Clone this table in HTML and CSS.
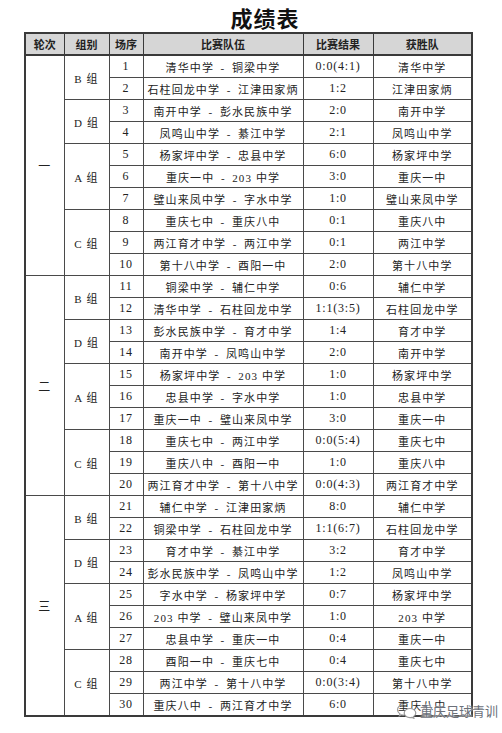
FILE: index.html
```html
<!DOCTYPE html>
<html lang="zh">
<head>
<meta charset="utf-8">
<link rel="stylesheet" href="styles.css">
</head>
<body>
<div class="page">
  <h1 class="title">成绩表</h1>
  <table class="results">
    <colgroup>
      <col class="c-round"><col class="c-group"><col class="c-no"><col class="c-teams"><col class="c-score"><col class="c-win">
    </colgroup>
    <thead>
      <tr><th>轮次</th><th>组别</th><th>场序</th><th>比赛队伍</th><th>比赛结果</th><th>获胜队</th></tr>
    </thead>
    <tbody>
      <tr><td rowspan="10" class="round">一</td><td rowspan="2">B 组</td><td class="num">1</td><td>清华中学&ensp;-&ensp;铜梁中学</td><td class="num">0:0(4:1)</td><td>清华中学</td></tr>
      <tr><td class="num">2</td><td>石柱回龙中学&ensp;-&ensp;江津田家炳</td><td class="num">1:2</td><td>江津田家炳</td></tr>
      <tr><td rowspan="2">D 组</td><td class="num">3</td><td>南开中学&ensp;-&ensp;彭水民族中学</td><td class="num">2:0</td><td>南开中学</td></tr>
      <tr><td class="num">4</td><td>凤鸣山中学&ensp;-&ensp;綦江中学</td><td class="num">2:1</td><td>凤鸣山中学</td></tr>
      <tr><td rowspan="3">A 组</td><td class="num">5</td><td>杨家坪中学&ensp;-&ensp;忠县中学</td><td class="num">6:0</td><td>杨家坪中学</td></tr>
      <tr><td class="num">6</td><td>重庆一中&ensp;-&ensp;203 中学</td><td class="num">3:0</td><td>重庆一中</td></tr>
      <tr><td class="num">7</td><td>璧山来凤中学&ensp;-&ensp;字水中学</td><td class="num">1:0</td><td>璧山来凤中学</td></tr>
      <tr><td rowspan="3">C 组</td><td class="num">8</td><td>重庆七中&ensp;-&ensp;重庆八中</td><td class="num">0:1</td><td>重庆八中</td></tr>
      <tr><td class="num">9</td><td>两江育才中学&ensp;-&ensp;两江中学</td><td class="num">0:1</td><td>两江中学</td></tr>
      <tr><td class="num">10</td><td>第十八中学&ensp;-&ensp;酉阳一中</td><td class="num">2:0</td><td>第十八中学</td></tr>

      <tr><td rowspan="10" class="round">二</td><td rowspan="2">B 组</td><td class="num">11</td><td>铜梁中学&ensp;-&ensp;辅仁中学</td><td class="num">0:6</td><td>辅仁中学</td></tr>
      <tr><td class="num">12</td><td>清华中学&ensp;-&ensp;石柱回龙中学</td><td class="num">1:1(3:5)</td><td>石柱回龙中学</td></tr>
      <tr><td rowspan="2">D 组</td><td class="num">13</td><td>彭水民族中学&ensp;-&ensp;育才中学</td><td class="num">1:4</td><td>育才中学</td></tr>
      <tr><td class="num">14</td><td>南开中学&ensp;-&ensp;凤鸣山中学</td><td class="num">2:0</td><td>南开中学</td></tr>
      <tr><td rowspan="3">A 组</td><td class="num">15</td><td>杨家坪中学&ensp;-&ensp;203 中学</td><td class="num">1:0</td><td>杨家坪中学</td></tr>
      <tr><td class="num">16</td><td>忠县中学&ensp;-&ensp;字水中学</td><td class="num">1:0</td><td>忠县中学</td></tr>
      <tr><td class="num">17</td><td>重庆一中&ensp;-&ensp;璧山来凤中学</td><td class="num">3:0</td><td>重庆一中</td></tr>
      <tr><td rowspan="3">C 组</td><td class="num">18</td><td>重庆七中&ensp;-&ensp;两江中学</td><td class="num">0:0(5:4)</td><td>重庆七中</td></tr>
      <tr><td class="num">19</td><td>重庆八中&ensp;-&ensp;酉阳一中</td><td class="num">1:0</td><td>重庆八中</td></tr>
      <tr><td class="num">20</td><td>两江育才中学&ensp;-&ensp;第十八中学</td><td class="num">0:0(4:3)</td><td>两江育才中学</td></tr>

      <tr><td rowspan="10" class="round">三</td><td rowspan="2">B 组</td><td class="num">21</td><td>辅仁中学&ensp;-&ensp;江津田家炳</td><td class="num">8:0</td><td>辅仁中学</td></tr>
      <tr><td class="num">22</td><td>铜梁中学&ensp;-&ensp;石柱回龙中学</td><td class="num">1:1(6:7)</td><td>石柱回龙中学</td></tr>
      <tr><td rowspan="2">D 组</td><td class="num">23</td><td>育才中学&ensp;-&ensp;綦江中学</td><td class="num">3:2</td><td>育才中学</td></tr>
      <tr><td class="num">24</td><td>彭水民族中学&ensp;-&ensp;凤鸣山中学</td><td class="num">1:2</td><td>凤鸣山中学</td></tr>
      <tr><td rowspan="3">A 组</td><td class="num">25</td><td>字水中学&ensp;-&ensp;杨家坪中学</td><td class="num">0:7</td><td>杨家坪中学</td></tr>
      <tr><td class="num">26</td><td>203 中学&ensp;-&ensp;璧山来凤中学</td><td class="num">1:0</td><td>203 中学</td></tr>
      <tr><td class="num">27</td><td>忠县中学&ensp;-&ensp;重庆一中</td><td class="num">0:4</td><td>重庆一中</td></tr>
      <tr><td rowspan="3">C 组</td><td class="num">28</td><td>酉阳一中&ensp;-&ensp;重庆七中</td><td class="num">0:4</td><td>重庆七中</td></tr>
      <tr><td class="num">29</td><td>两江中学&ensp;-&ensp;第十八中学</td><td class="num">0:0(3:4)</td><td>第十八中学</td></tr>
      <tr><td class="num">30</td><td>重庆八中&ensp;-&ensp;两江育才中学</td><td class="num">6:0</td><td>重庆八中</td></tr>
    </tbody>
  </table>
  <div class="watermark">
    <svg class="wm-icon" width="22" height="16" viewBox="0 0 22 16">
      <path d="M8 1.5c-3.6 0-6.5 2.4-6.5 5.3 0 1.7 1 3.2 2.5 4.2l-.6 1.9 2.2-1.1c.8.2 1.6.3 2.4.3" fill="none" stroke="#9a9a9a" stroke-width="1.2"/>
      <path d="M14 5.5c-3.2 0-5.8 2.1-5.8 4.6s2.6 4.6 5.8 4.6c.7 0 1.4-.1 2-.3l1.9.9-.5-1.6c1.4-.9 2.4-2.2 2.4-3.6 0-2.5-2.6-4.6-5.8-4.6z" fill="#fff" stroke="#9a9a9a" stroke-width="1.2"/>
    </svg>
    <span class="wm-text">重庆足球青训</span>
  </div>
</div>
</body>
</html>
```
FILE: styles.css
```css
html, body {
  margin: 0;
  padding: 0;
  background: #ffffff;
}
.page {
  position: relative;
  width: 502px;
  height: 733px;
  overflow: hidden;
}
.title {
  margin: 0;
  height: 32px;
  line-height: 34px;
  padding-left: 28px;
  text-align: center;
  font-family: "Noto Sans CJK SC", sans-serif;
  font-weight: 700;
  font-size: 22px;
  color: #111;
  letter-spacing: 1px;
}
.results {
  margin-left: 24px;
  border-collapse: collapse;
  table-layout: fixed;
  width: 447px;
  border: 2px solid #3a3a3a;
  font-family: "Liberation Serif", "Noto Sans CJK SC", serif;
  font-size: 11px;
  color: #222;
}
.c-round { width: 39px; }
.c-group { width: 45px; }
.c-no { width: 34px; }
.c-teams { width: 160px; }
.c-score { width: 70px; }
.c-win { width: 99px; }
.results th {
  height: 20px;
  padding: 0;
  background: #d6d6d6;
  border: 1px solid #3a3a3a;
  border-bottom-width: 2px;
  font-family: "Noto Sans CJK SC", sans-serif;
  font-weight: 700;
  font-size: 11px;
  color: #222;
  text-align: center;
}
.results td {
  height: 21px;
  padding: 0;
  border: 1px solid #4a4a4a;
  text-align: center;
  vertical-align: middle;
  white-space: nowrap;
  letter-spacing: 1.1px;
}
.results td.num {
  font-size: 12px;
  letter-spacing: 0.8px;
}
.results td.round {
  font-size: 12px;
}
.watermark {
  position: absolute;
  right: 4px;
  bottom: 13px;
  display: flex;
  align-items: center;
  gap: 2px;
}
.wm-text {
  font-family: "Noto Sans CJK SC", sans-serif;
  font-size: 13px;
  color: #6b7079;
  text-shadow: 0 0 2px #fff, 0 0 2px #fff;
}
```
